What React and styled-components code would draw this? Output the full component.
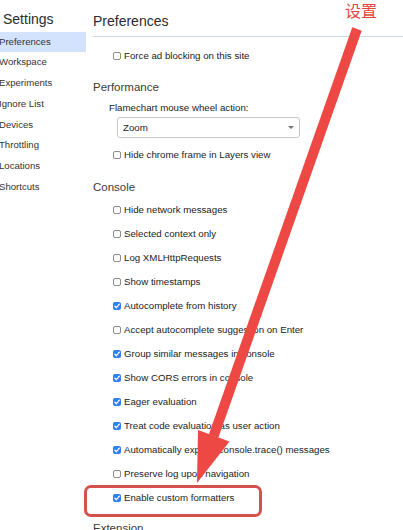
import React from "react";
import styled, { createGlobalStyle } from "styled-components";

const Global = createGlobalStyle`
  html, body { margin: 0; padding: 0; overflow: hidden; background: #fff; }
  body { font-family: "Liberation Sans", Arial, sans-serif; color: #202124; }
  * { box-sizing: border-box; }
`;

const Page = styled.div`
  position: relative;
  width: 403px;
  height: 530px;
  overflow: hidden;
  display: flex;
  align-items: flex-start;
`;

const Sidebar = styled.nav`
  flex: 0 0 94px;
  margin-left: -8px;
  display: flex;
  flex-direction: column;
`;

const SideTitle = styled.div`
  padding: 9px 0 0 11px;
  font-size: 14px;
  line-height: 20px;
  color: #2b2b2b;
`;

const SideList = styled.div`
  margin-top: 2.5px;
  display: flex;
  flex-direction: column;
`;

const SideItem = styled.div`
  height: 20.8px;
  line-height: 20.8px;
  padding-left: 7px;
  font-size: 9.6px;
  color: #333;
  background: ${(p) => (p.$active ? "#d3e3fd" : "transparent")};
`;

const Main = styled.main`
  flex: 1;
  padding-left: 7px;
  display: flex;
  flex-direction: column;
`;

const Header = styled.div`
  padding: 10.5px 0 5.5px 0;
  font-size: 14px;
  line-height: 20px;
  color: #2b2b2b;
  border-bottom: 1px solid #d3dbe3;
`;

const Section = styled.section`
  display: flex;
  flex-direction: column;
  margin-top: ${(p) => p.$top || 0}px;
`;

const SectionTitle = styled.div`
  height: 20px;
  line-height: 20px;
  font-size: 11.5px;
  color: #3a3a3a;
`;

const Row = styled.label`
  height: 24px;
  display: flex;
  align-items: center;
  gap: 3.5px;
  padding-left: 19.5px;
  margin-top: ${(p) => p.$top || 0}px;
`;

const Text = styled.span`
  font-size: 9.7px;
  line-height: 12px;
  color: #222;
  white-space: nowrap;
`;

const Box = styled.span`
  flex: 0 0 8px;
  width: 8px;
  height: 8px;
  border-radius: 2px;
  display: flex;
  align-items: center;
  justify-content: center;
  border: ${(p) => (p.$checked ? "none" : "1px solid #8c8c8c")};
  background: ${(p) => (p.$checked ? "#2f7ef5" : "#fff")};
`;

const FieldLabel = styled.div`
  height: 16px;
  line-height: 16px;
  padding-left: 16px;
  margin-top: 3px;
  font-size: 9.7px;
  color: #222;
`;

const Select = styled.div`
  margin: 1px 0 0 24px;
  width: 183px;
  height: 21px;
  border: 1px solid #c6c6c6;
  border-radius: 3px;
  display: flex;
  align-items: center;
  justify-content: space-between;
  padding: 0 5px 0 5px;
  font-size: 9.7px;
  color: #222;
`;

const Caret = styled.span`
  width: 0;
  height: 0;
  border-left: 3px solid transparent;
  border-right: 3px solid transparent;
  border-top: 3px solid #777;
`;

const Overlay = styled.svg`
  position: absolute;
  left: 0;
  top: 0;
  pointer-events: none;
`;

const Note = styled.div`
  position: absolute;
  left: 345px;
  top: 1px;
  font-family: "Noto Sans CJK SC", "Noto Sans CJK JP", sans-serif;
  font-size: 16px;
  line-height: 18px;
  color: #e2463f;
`;

const Highlight = styled.div`
  position: absolute;
  left: 84px;
  top: 485px;
  width: 178px;
  height: 32px;
  border: 3px solid #d6504c;
  border-radius: 7px;
  pointer-events: none;
`;

function Check({ checked, children, top }) {
  return (
    <Row $top={top}>
      <Box $checked={checked}>
        {checked && (
          <svg width="6" height="6" viewBox="0 0 6 6">
            <path d="M0.8 3.1 L2.4 4.7 L5.3 1.2" fill="none" stroke="#fff" strokeWidth="1.3" strokeLinecap="round" strokeLinejoin="round" />
          </svg>
        )}
      </Box>
      <Text>{children}</Text>
    </Row>
  );
}

const sideItems = ["Preferences", "Workspace", "Experiments", "Ignore List", "Devices", "Throttling", "Locations", "Shortcuts"];

const consoleItems = [
  ["Hide network messages", false],
  ["Selected context only", false],
  ["Log XMLHttpRequests", false],
  ["Show timestamps", false],
  ["Autocomplete from history", true],
  ["Accept autocomplete suggestion on Enter", false],
  ["Group similar messages in console", true],
  ["Show CORS errors in console", true],
  ["Eager evaluation", true],
  ["Treat code evaluation as user action", true],
  ["Automatically expand console.trace() messages", true],
  ["Preserve log upon navigation", false],
  ["Enable custom formatters", true],
];

export default function App() {
  return (
    <>
      <Global />
      <Page>
        <Sidebar>
          <SideTitle>Settings</SideTitle>
          <SideList>
            {sideItems.map((s, i) => (
              <SideItem key={s} $active={i === 0}>{s}</SideItem>
            ))}
          </SideList>
        </Sidebar>
        <Main>
          <Header>Preferences</Header>
          <Section $top={7}>
            <Check checked={false}>Force ad blocking on this site</Check>
          </Section>
          <Section $top={9}>
            <SectionTitle>Performance</SectionTitle>
            <FieldLabel>Flamechart mouse wheel action:</FieldLabel>
            <Select>
              <span>Zoom</span>
              <Caret />
            </Select>
            <Check checked={false} top={5}>Hide chrome frame in Layers view</Check>
          </Section>
          <Section $top={9.5}>
            <SectionTitle>Console</SectionTitle>
            <div style={{ height: 1 }} />
            {consoleItems.map(([t, c]) => (
              <Check key={t} checked={c}>{t}</Check>
            ))}
          </Section>
          <Section $top={8}>
            <SectionTitle>Extension</SectionTitle>
          </Section>
        </Main>

        <Highlight />
        <Overlay width="403" height="530" viewBox="0 0 403 530">
          <line x1="357" y1="29" x2="213.6" y2="436" stroke="#ee4845" strokeWidth="10" />
          <polygon points="229.5,441.5 197,483 198,430" fill="#ee4845" />
        </Overlay>
        <Note>设置</Note>
      </Page>
    </>
  );
}
